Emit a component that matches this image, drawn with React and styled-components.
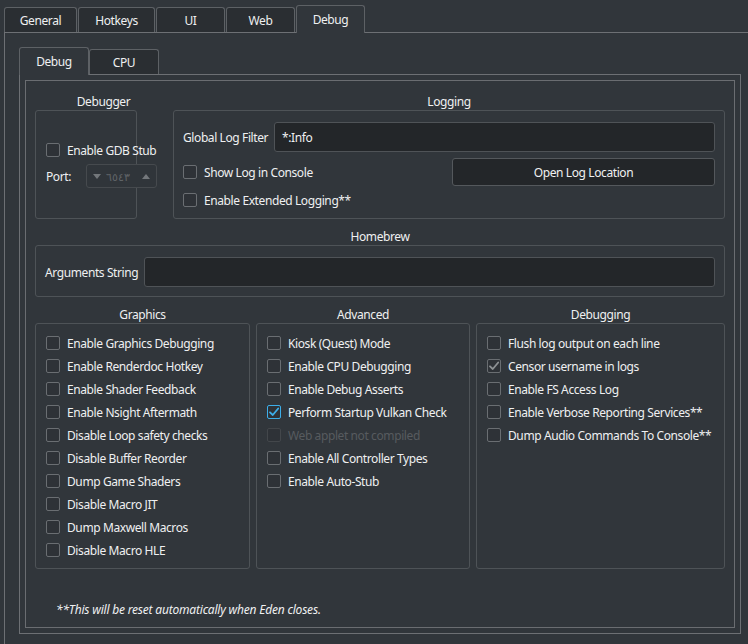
import React from 'react';
import styled, { createGlobalStyle } from 'styled-components';

const GlobalStyle = createGlobalStyle`
  html, body { margin: 0; padding: 0; background: #31363b; overflow: hidden; }
  * { box-sizing: border-box; }
`;

const Window = styled.div`
  width: 748px;
  height: 644px;
  overflow: hidden;
  background: #31363b;
  padding: 5px 0 0 4px;
  font-family: "Noto Sans", "Open Sans", sans-serif;
  font-size: 12px;
  letter-spacing: -0.4px;
  color: #eff0f1;
`;

const TabBar = styled.div`
  display: flex;
  align-items: flex-end;
  gap: ${p => p.$gap}px;
  height: 27px;
  position: relative;
  z-index: 1;
`;

const Tab = styled.div`
  width: ${p => p.$w}px;
  height: ${p => (p.$active ? 28 : 25)}px;
  margin-bottom: ${p => (p.$active ? -1 : 0)}px;
  padding-bottom: ${p => (p.$active ? 1 : 0)}px;
  display: flex;
  align-items: center;
  justify-content: center;
  background: ${p => (p.$active ? '#31363b' : '#2a2e32')};
  border: 1px solid #5d6165;
  border-bottom: none;
  border-radius: 3px 3px 0 0;
  color: #eff0f1;
  white-space: nowrap;
`;

const OuterPane = styled.div`
  width: 760px;
  height: 700px;
  border-top: 1px solid #6d7074;
  border-left: 1px solid #6d7074;
  padding: 14px 0 0 14px;
`;

const InnerPane = styled.div`
  width: 722px;
  height: 560px;
  border: 1px solid #6d7074;
  padding: 5px;
`;

const Frame = styled.div`
  width: 710px;
  height: 548px;
  border: 1px solid #6a6d71;
  padding: 12px 9px 9px 9px;
  display: flex;
  flex-direction: column;
`;

const Row = styled.div`
  display: grid;
  grid-template-columns: ${p => p.$cols};
  column-gap: ${p => p.$gap}px;
  margin-top: ${p => p.$mt || 0}px;
`;

const Group = styled.div`
  display: flex;
  flex-direction: column;
  min-width: 0;
`;

const GroupTitle = styled.div`
  height: 17px;
  line-height: 17px;
  text-align: center;
  padding-left: ${p => p.$shift || 0}px;
  white-space: nowrap;
`;

const GroupBox = styled.div`
  height: ${p => p.$h}px;
  border: 1px solid #4e5357;
  border-radius: 3px;
  padding: ${p => p.$pad};
  display: flex;
  flex-direction: column;
  gap: ${p => p.$gap || 0}px;
`;

const CheckRow = styled.label`
  display: flex;
  align-items: center;
  gap: 7px;
  height: 20px;
  white-space: nowrap;
  color: ${p => (p.$disabled ? '#575b5f' : '#eff0f1')};
`;

const Box = styled.span`
  width: 14px;
  height: 14px;
  flex: none;
  border: 1px solid ${p => (p.$state === 'blue' ? '#3daee9' : p.$disabled ? '#43474b' : '#6a6e72')};
  border-radius: 2px;
  background: #2e3237;
  display: flex;
  align-items: center;
  justify-content: center;
`;

const FieldRow = styled.div`
  display: flex;
  align-items: center;
`;

const FieldLabel = styled.span`
  width: ${p => p.$w}px;
  flex: none;
  white-space: nowrap;
`;

const TextInput = styled.div`
  flex: 1;
  height: 30px;
  background: #232629;
  border: 1px solid #4f5357;
  border-radius: 3px;
  padding: 0 7px;
  display: flex;
  align-items: center;
`;

const Split = styled.div`
  display: grid;
  grid-template-columns: 1fr 1fr;
  column-gap: 6px;
  align-items: center;
  margin-top: ${p => p.$mt}px;
`;

const Button = styled.div`
  height: 28px;
  background: #232629;
  border: 1px solid #54585c;
  border-radius: 3px;
  display: flex;
  align-items: center;
  justify-content: center;
`;

const Spin = styled.div`
  width: 71px;
  height: 24px;
  flex: none;
  border: 1px solid #464a4e;
  border-radius: 3px;
  background: #30353a;
  display: flex;
  align-items: center;
  justify-content: space-between;
  padding: 0 6px 0 6px;
  color: #606468;
`;

const SpinText = styled.span`
  flex: 1;
  padding-left: 5px;
  font-size: 11px;
  letter-spacing: 0;
`;

const Footnote = styled.div`
  margin-top: 32px;
  margin-left: 21px;
  height: 17px;
  line-height: 17px;
  font-style: italic;
  font-size: 12px;
  letter-spacing: -0.2px;
`;

const Check = ({ state }) => (
  <svg width="12" height="12" viewBox="0 0 12 12">
    <path
      d="M2 6.3 L4.8 9 L10.2 2.5"
      fill="none"
      stroke={state === 'blue' ? '#3daee9' : '#8d9194'}
      strokeWidth="1.8"
      strokeLinecap="round"
      strokeLinejoin="round"
    />
  </svg>
);

const CheckBox = ({ label, state, disabled }) => (
  <CheckRow $disabled={disabled}>
    <Box $state={state} $disabled={disabled}>{state && <Check state={state} />}</Box>
    {label}
  </CheckRow>
);

const Tri = ({ up }) => (
  <svg width="8" height="5" viewBox="0 0 8 5">
    <path d={up ? 'M0 5 L4 0 L8 5 Z' : 'M0 0 L8 0 L4 5 Z'} fill="#73777b" />
  </svg>
);

const graphics = [
  'Enable Graphics Debugging',
  'Enable Renderdoc Hotkey',
  'Enable Shader Feedback',
  'Enable Nsight Aftermath',
  'Disable Loop safety checks',
  'Disable Buffer Reorder',
  'Dump Game Shaders',
  'Disable Macro JIT',
  'Dump Maxwell Macros',
  'Disable Macro HLE',
];

const advanced = [
  { l: 'Kiosk (Quest) Mode' },
  { l: 'Enable CPU Debugging' },
  { l: 'Enable Debug Asserts' },
  { l: 'Perform Startup Vulkan Check', s: 'blue' },
  { l: 'Web applet not compiled', d: true },
  { l: 'Enable All Controller Types' },
  { l: 'Enable Auto-Stub' },
];

const debugging = [
  { l: 'Flush log output on each line' },
  { l: 'Censor username in logs', s: 'grey' },
  { l: 'Enable FS Access Log' },
  { l: 'Enable Verbose Reporting Services**' },
  { l: 'Dump Audio Commands To Console**' },
];

export default function App() {
  return (
    <>
      <GlobalStyle />
      <Window>
        <TabBar $gap={1}>
          <Tab $w={73}>General</Tab>
          <Tab $w={77}>Hotkeys</Tab>
          <Tab $w={69}>UI</Tab>
          <Tab $w={69}>Web</Tab>
          <Tab $w={69} $active>Debug</Tab>
        </TabBar>
        <OuterPane>
          <TabBar $gap={0}>
            <Tab $w={70} $active>Debug</Tab>
            <Tab $w={70}>CPU</Tab>
          </TabBar>
          <InnerPane>
            <Frame>
              <Row $cols="102px minmax(0, 1fr)" $gap={36}>
                <Group>
                  <GroupTitle $shift={35}>Debugger</GroupTitle>
                  <GroupBox $h={109} $pad="29px 0 0 10px" $gap={4}>
                    <CheckBox label="Enable GDB Stub" />
                    <FieldRow>
                      <FieldLabel $w={40}>Port:</FieldLabel>
                      <Spin>
                        <Tri />
                        <SpinText>٦٥٤٣</SpinText>
                        <Tri up />
                      </Spin>
                    </FieldRow>
                  </GroupBox>
                </Group>
                <Group>
                  <GroupTitle>Logging</GroupTitle>
                  <GroupBox $h={109} $pad="11px 9px 0 9px">
                    <FieldRow>
                      <FieldLabel $w={91}>Global Log Filter</FieldLabel>
                      <TextInput>*:Info</TextInput>
                    </FieldRow>
                    <Split $mt={6}>
                      <CheckBox label="Show Log in Console" />
                      <Button>Open Log Location</Button>
                    </Split>
                    <Split $mt={4}>
                      <CheckBox label="Enable Extended Logging**" />
                    </Split>
                  </GroupBox>
                </Group>
              </Row>

              <Row $cols="minmax(0, 1fr)" $gap={0} $mt={9}>
                <Group>
                  <GroupTitle>Homebrew</GroupTitle>
                  <GroupBox $h={52} $pad="11px 9px 9px 9px">
                    <FieldRow>
                      <FieldLabel $w={99}>Arguments String</FieldLabel>
                      <TextInput />
                    </FieldRow>
                  </GroupBox>
                </Group>
              </Row>

              <Row $cols="215px 214px minmax(0, 1fr)" $gap={6} $mt={9}>
                <Group>
                  <GroupTitle>Graphics</GroupTitle>
                  <GroupBox $h={246} $pad="9px 8px 0 10px" $gap={3}>
                    {graphics.map(g => (
                      <CheckBox key={g} label={g} />
                    ))}
                  </GroupBox>
                </Group>
                <Group>
                  <GroupTitle>Advanced</GroupTitle>
                  <GroupBox $h={246} $pad="9px 8px 0 10px" $gap={3}>
                    {advanced.map(a => (
                      <CheckBox key={a.l} label={a.l} state={a.s} disabled={a.d} />
                    ))}
                  </GroupBox>
                </Group>
                <Group>
                  <GroupTitle>Debugging</GroupTitle>
                  <GroupBox $h={246} $pad="9px 8px 0 10px" $gap={3}>
                    {debugging.map(a => (
                      <CheckBox key={a.l} label={a.l} state={a.s} />
                    ))}
                  </GroupBox>
                </Group>
              </Row>

              <Footnote>**This will be reset automatically when Eden closes.</Footnote>
            </Frame>
          </InnerPane>
        </OuterPane>
      </Window>
    </>
  );
}
